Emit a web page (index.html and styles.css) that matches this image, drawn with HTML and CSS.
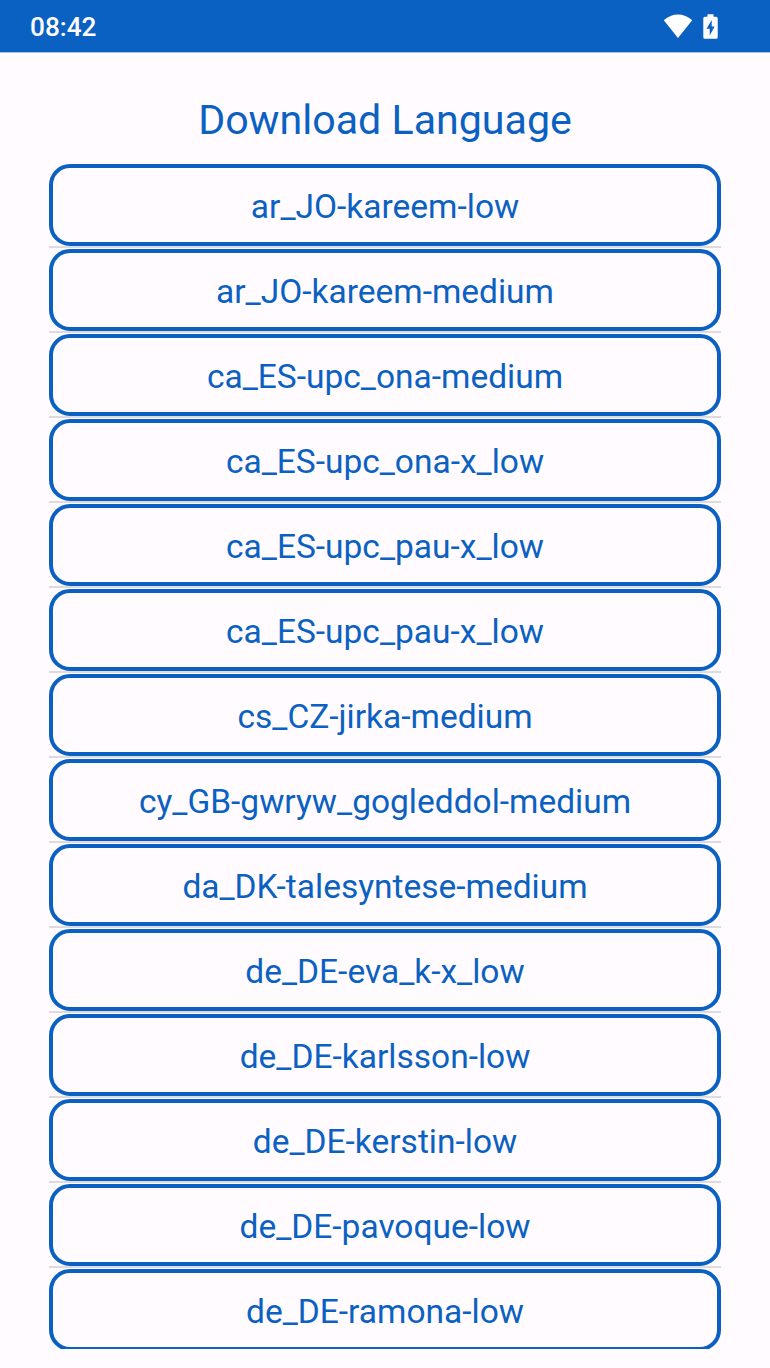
FILE: index.html
```html
<!DOCTYPE html>
<html lang="en">
<head>
<meta charset="utf-8">
<title>Download Language</title>
<link rel="stylesheet" href="styles.css">
</head>
<body>
<header class="status">
  <span class="clock">08:42</span>
  <span class="icons">
    <svg class="wifi" width="30" height="26" viewBox="0 0 30 26"><path d="M0.800 6.200C5 2.500 10 0.500 15 0.500s10 2 14.200 5.700L15 24z"/></svg>
    <svg class="battery" width="15" height="26" viewBox="0 0 15 26"><path fill-rule="evenodd" d="M4.500 0.300h6v2.500h2.700q1.500 0 1.500 1.500v18.900q0 1.500-1.500 1.500H1.800Q0.300 24.700 0.300 23.200V4.300Q0.300 2.800 1.800 2.800h2.700zM8.700 6L3.500 14.800h3.200V21.500l4.900-8.900H8.700z"/></svg>
  </span>
</header>
<main class="page">
  <h1 class="title">Download Language</h1>
  <ul class="list">
    <li class="row"><button class="item">ar_JO-kareem-low</button></li>
    <li class="row"><button class="item">ar_JO-kareem-medium</button></li>
    <li class="row"><button class="item">ca_ES-upc_ona-medium</button></li>
    <li class="row"><button class="item">ca_ES-upc_ona-x_low</button></li>
    <li class="row"><button class="item">ca_ES-upc_pau-x_low</button></li>
    <li class="row"><button class="item">ca_ES-upc_pau-x_low</button></li>
    <li class="row"><button class="item">cs_CZ-jirka-medium</button></li>
    <li class="row"><button class="item">cy_GB-gwryw_gogleddol-medium</button></li>
    <li class="row"><button class="item">da_DK-talesyntese-medium</button></li>
    <li class="row"><button class="item">de_DE-eva_k-x_low</button></li>
    <li class="row"><button class="item">de_DE-karlsson-low</button></li>
    <li class="row"><button class="item">de_DE-kerstin-low</button></li>
    <li class="row"><button class="item">de_DE-pavoque-low</button></li>
    <li class="row"><button class="item">de_DE-ramona-low</button></li>
  </ul>
</main>
</body>
</html>
```
FILE: styles.css
```css
* { box-sizing: border-box; }
body { margin: 0; height: 1368px; overflow: hidden; background: #fffbff; color: #0b61c2; font-family: Roboto, sans-serif; }
.status { height: 53px; display: flex; align-items: center; justify-content: space-between; padding: 2px 52px 0 30px; background: #0b61c2; border-bottom: 1px solid #a5c4e8; color: #fff; }
.clock { font-size: 26.2px; font-weight: 500; line-height: 30px; }
.icons { display: flex; align-items: center; gap: 10px; }
.icons svg { fill: #fff; display: block; }
.page { padding: 0 49px; }
.title { margin: 0; padding-top: 43px; height: 111px; font-size: 41.15px; line-height: 49px; font-weight: 400; text-align: center; }
.list { margin: 0; padding: 0; list-style: none; height: 1185px; overflow: hidden; }
.row { height: 84px; margin-bottom: 1px; border-bottom: 2px solid #dddbe0; }
.item { display: block; width: 100%; height: 82px; padding: 3px 0 0; border: 4px solid #0b61c2; border-radius: 21px; background: transparent; color: inherit; font: 400 33.5px/40px Roboto, sans-serif; text-align: center; }
```
